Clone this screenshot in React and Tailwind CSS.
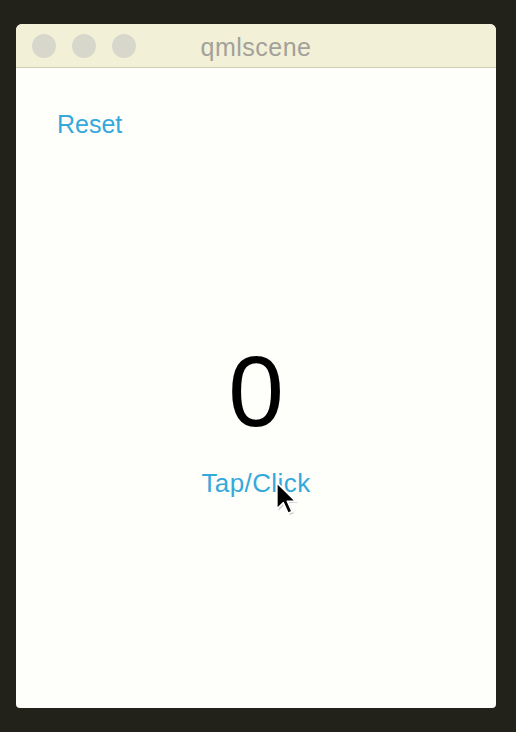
export default function App() {
  const font = { fontFamily: '"Liberation Sans", Arial, sans-serif' }

  return (
    <div className="relative h-[732px] w-[516px] overflow-hidden bg-[#22221a] pl-4 pt-6" style={font}>
      <div className="flex h-[684px] w-[480px] flex-col overflow-hidden rounded-t-[6px] rounded-b-[4px] bg-[#fefefa]">
        <div className="relative flex h-[44px] shrink-0 items-center border-b border-[#cfcdb4] bg-[#f2f0d6] pl-4">
          <div className="flex gap-4">
            <span className="h-6 w-6 rounded-full bg-[#d8d7cc]" />
            <span className="h-6 w-6 rounded-full bg-[#d8d7cc]" />
            <span className="h-6 w-6 rounded-full bg-[#d8d7cc]" />
          </div>
          <span className="absolute inset-x-0 top-[8px] text-center text-[25px] leading-[30px] tracking-[0.5px] text-[#a2a19a]">
            qmlscene
          </span>
        </div>

        <div className="flex flex-1 flex-col">
          <div className="pl-[41px] pt-[41px]">
            <span className="text-[25px] leading-[30px] text-[#35a9dc]">Reset</span>
          </div>

          <div className="mt-[201px] flex flex-col items-center">
            <span className="text-[100px] leading-[100px] text-black">0</span>
            <span className="mt-[27px] text-[26px] leading-[30px] tracking-[0.4px] text-[#35a9dc]">Tap/Click</span>
          </div>
        </div>
      </div>

      <svg
        className="absolute left-[275px] top-[481px]"
        width="24"
        height="34"
        viewBox="0 0 14 20"
      >
        <path
          d="M2 2 L2 17.5 L5.8 13.8 L8.6 20 L11 19 L8.3 13 L13.2 13 Z"
          fill="#000"
          opacity="0.2"
        />
        <path
          d="M1 1 L1 16.5 L4.8 12.8 L7.6 19 L10 18 L7.3 12 L12.2 12 Z"
          fill="#000"
          stroke="#fff"
          strokeWidth="1"
          strokeLinejoin="round"
        />
      </svg>
    </div>
  )
}
